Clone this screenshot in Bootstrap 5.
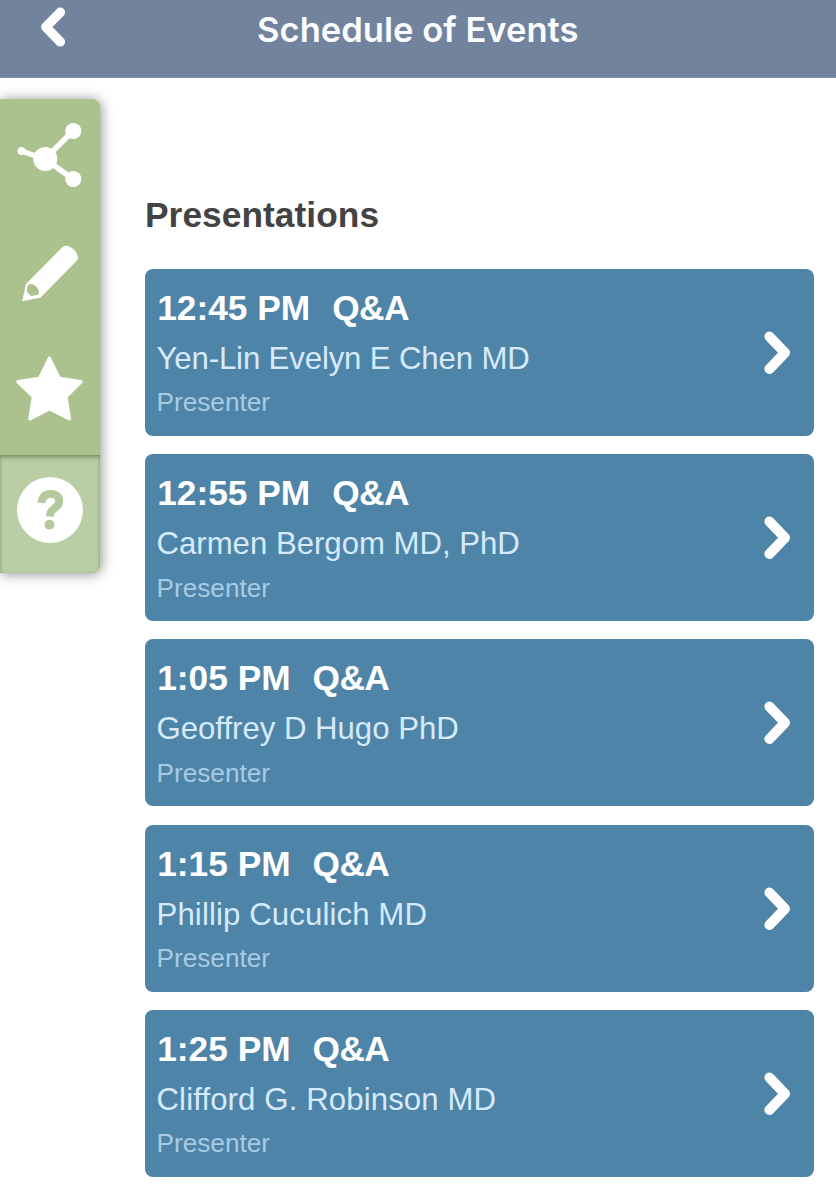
<!DOCTYPE html>
<html lang="en">
<head>
<meta charset="utf-8">
<meta name="viewport" content="width=device-width, initial-scale=1">
<title>Schedule of Events</title>
<link href="https://cdn.jsdelivr.net/npm/bootstrap@5.3.0/dist/css/bootstrap.min.css" rel="stylesheet">
<style>
body{font-family:"Liberation Sans",Arial,sans-serif;background:#fff;height:1200px;overflow:hidden}
.topbar{height:78px;background:#71839d;border-bottom:1px solid #8590a4;padding:0 0 0 40px}
.topbar h1{font:600 34.6px/40px Inter,sans-serif;color:#fafcff;margin:9px 0 0 191px;white-space:nowrap}
.back{margin-top:6px;width:26px;height:42px}
.tools{width:100px;margin-top:21px;height:474px;background:#abc18e;border-radius:0 8px 8px 0;box-shadow:1px 1px 13px rgba(0,0,0,.45);overflow:hidden}
.tool{height:118.5px;width:100px}
.tool svg{width:100px;height:118px}
.tool-help{background:#bacea5;box-shadow:inset 0 3px 5px -1px rgba(75,95,50,.6),inset 0 0 2px rgba(75,95,50,.2)}
.tools-clip{width:145px}
.sessions{width:668.5px;padding-top:113px}
.sessions h2{font-size:35.3px;line-height:48px;font-weight:700;color:#434343;margin:0 0 30px 0;letter-spacing:.05px}
.session{height:167px;background:#4e84a7;border-radius:8px;padding:18px 23px 0 11.5px;text-decoration:none}
.when{font-size:35.3px;line-height:42px;font-weight:700;color:#fff;white-space:nowrap;padding-left:.7px}
.what{margin-left:22px;letter-spacing:-.6px}
.who{font-size:31.2px;line-height:40px;margin-top:10px;color:#d5eafb;white-space:nowrap;letter-spacing:-.15px}
.name-mid{letter-spacing:-.03px}
.name-wide{letter-spacing:.1px}
.role{font-size:26.2px;line-height:34px;margin-top:6.4px;color:#a8cbe4}
.stack-gap{gap:18.2px}
.go{width:28px;height:46px;margin-top:43px}
</style>
</head>
<body>
<header class="topbar d-flex align-items-start">
<svg class="back flex-shrink-0" viewBox="40 6 26 42"><path d="M60.3 12.3 45.8 27 60.3 41.8" fill="none" stroke="#fff" stroke-width="9.6" stroke-linecap="round" stroke-linejoin="round"/></svg>
<h1>Schedule of Events</h1>
</header>
<div class="d-flex align-items-start">
<div class="tools-clip flex-shrink-0">
<nav class="tools d-flex flex-column" aria-label="Tools">
<a class="tool" href="#" aria-label="Share"><svg viewBox="0 99 100 118"><path d="M21 151 45 159 73 131M45 159 73 179" fill="none" stroke="#fff" stroke-width="5.4"/><g fill="#fff"><circle cx="21.5" cy="151" r="4"/><circle cx="45.3" cy="159" r="12"/><circle cx="73.3" cy="131" r="8.1"/><circle cx="73.3" cy="179" r="8.1"/></g></svg></a>
<a class="tool" href="#" aria-label="Notes"><svg viewBox="0 217.5 100 118"><path fill="#fff" fill-rule="evenodd" d="M22.2 300.8 26 283.5 62.5 246.5Q66.5 243.5 71.5 247.2 77.5 251.5 78 257.5L77 260 40.3 297.2ZM29 283.8Q26 286 27.3 291.5L31 295.5 38.2 294.3Q40.2 290 36.5 286.3 33 282.5 29 283.8Z"/></svg></a>
<a class="tool" href="#" aria-label="Favorite"><svg viewBox="0 336 100 118"><path fill="#fff" stroke="#fff" stroke-width="3.5" stroke-linejoin="round" d="M49.4 358.4 59.3 378.6 81 381.8 65.8 396.7 69.3 418.7 49.5 408.6 30 418.7 33.5 396.7 18 381.8 39.6 378.6Z"/></svg></a>
<a class="tool tool-help" href="#" aria-label="Help"><svg viewBox="0 454.5 100 118"><circle cx="50" cy="509.5" r="33" fill="#fff"/><path d="M41.3 502.5Q42.5 493.4 51 493.4 59.2 494 59.2 500.7 59 505 54.2 508 50 510.5 49.8 516" fill="none" stroke="#b5c99e" stroke-width="7.8"/><circle cx="49.5" cy="524.2" r="4.9" fill="#b5c99e"/></svg></a>
</nav>
</div>
<main class="sessions">
<h2>Presentations</h2>
<div class="d-flex flex-column stack-gap">
<a class="session d-flex justify-content-between" href="#"><div><div class="when">12:45 PM<span class="what">Q&amp;A</span></div><div class="who">Yen-Lin Evelyn E Chen MD</div><div class="role">Presenter</div></div><svg class="go" viewBox="0 0 28 46"><path d="M6.4 6.5 22 22.7 6.4 39" fill="none" stroke="#fff" stroke-width="10" stroke-linecap="round" stroke-linejoin="round"/></svg></a>
<a class="session d-flex justify-content-between" href="#"><div><div class="when">12:55 PM<span class="what">Q&amp;A</span></div><div class="who name-mid">Carmen Bergom MD, PhD</div><div class="role">Presenter</div></div><svg class="go" viewBox="0 0 28 46"><path d="M6.4 6.5 22 22.7 6.4 39" fill="none" stroke="#fff" stroke-width="10" stroke-linecap="round" stroke-linejoin="round"/></svg></a>
<a class="session d-flex justify-content-between" href="#"><div><div class="when">1:05 PM<span class="what">Q&amp;A</span></div><div class="who name-mid">Geoffrey D Hugo PhD</div><div class="role">Presenter</div></div><svg class="go" viewBox="0 0 28 46"><path d="M6.4 6.5 22 22.7 6.4 39" fill="none" stroke="#fff" stroke-width="10" stroke-linecap="round" stroke-linejoin="round"/></svg></a>
<a class="session d-flex justify-content-between" href="#"><div><div class="when">1:15 PM<span class="what">Q&amp;A</span></div><div class="who name-wide">Phillip Cuculich MD</div><div class="role">Presenter</div></div><svg class="go" viewBox="0 0 28 46"><path d="M6.4 6.5 22 22.7 6.4 39" fill="none" stroke="#fff" stroke-width="10" stroke-linecap="round" stroke-linejoin="round"/></svg></a>
<a class="session d-flex justify-content-between" href="#"><div><div class="when">1:25 PM<span class="what">Q&amp;A</span></div><div class="who name-wide">Clifford G. Robinson MD</div><div class="role">Presenter</div></div><svg class="go" viewBox="0 0 28 46"><path d="M6.4 6.5 22 22.7 6.4 39" fill="none" stroke="#fff" stroke-width="10" stroke-linecap="round" stroke-linejoin="round"/></svg></a>
</div>
</main>
</div>
<script src="https://cdn.jsdelivr.net/npm/bootstrap@5.3.0/dist/js/bootstrap.bundle.min.js"></script>
</body>
</html>
